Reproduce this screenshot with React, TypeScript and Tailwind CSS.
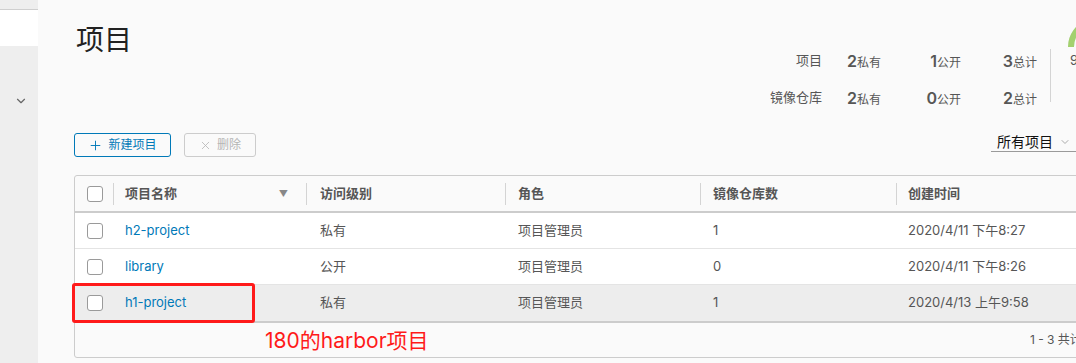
import React from 'react';
import { ChevronDown, Plus, X } from 'lucide-react';

const font = { fontFamily: 'Inter, "Noto Sans CJK SC", sans-serif' };

const rows = [
  { name: 'h2-project', access: '私有', role: '项目管理员', count: '1', time: '2020/4/11 下午8:27', active: false },
  { name: 'library', access: '公开', role: '项目管理员', count: '0', time: '2020/4/11 下午8:26', active: false },
  { name: 'h1-project', access: '私有', role: '项目管理员', count: '1', time: '2020/4/13 上午9:58', active: true },
];

const stats = [
  { label: '项目', priv: '2', pub: '1', total: '3' },
  { label: '镜像仓库', priv: '2', pub: '0', total: '2' },
];

const cols = 'grid grid-cols-[38px_193px_199px_195px_196px_268px]';

const Checkbox = () => (
  <div className="ml-[12px] h-[16px] w-[16px] rounded-[3px] border border-[#9a9a9a] bg-white" />
);

const Stat = ({ n, t }: { n: string; t: string }) => (
  <div className="flex items-baseline justify-end text-[#565656]">
    <span className="text-[16px] font-semibold">{n}</span>
    <span className="text-[12px]">{t}</span>
  </div>
);

export default function App() {
  return (
    <div className="flex h-[363px] w-[1076px] overflow-hidden bg-[#fafafa]" style={font}>
      {/* sidebar */}
      <div className="flex w-[38px] shrink-0 flex-col bg-[#eeeeee]">
        <div className="h-[10px] border-b border-[#cfcfcf]" />
        <div className="h-[36px] bg-white" />
        <div className="mt-[48px] flex justify-center pl-[3px]">
          <ChevronDown className="h-[14px] w-[14px] text-[#666]" strokeWidth={2} />
        </div>
      </div>

      {/* main */}
      <div className="flex flex-col pl-[36px] pt-[18px]">
        <div className="flex h-[115px]">
          <h1 className="mt-[4px] w-[686px] shrink-0 pl-[2px] text-[28px] leading-[36px] text-[#222]">项目</h1>
          <div className="mt-[24px] grid h-fit grid-cols-[62px_59px_80px_76px]">
            {stats.map((s) => (
              <React.Fragment key={s.label}>
                <div className="flex h-[37px] items-center justify-end text-[13px] text-[#565656]">{s.label}</div>
                <div className="flex h-[37px] items-center justify-end"><Stat n={s.priv} t="私有" /></div>
                <div className="flex h-[37px] items-center justify-end"><Stat n={s.pub} t="公开" /></div>
                <div className="flex h-[37px] items-center justify-end"><Stat n={s.total} t="总计" /></div>
              </React.Fragment>
            ))}
          </div>
          <div className="ml-[13px] mt-[31px] h-[53px] w-px bg-[#d4d4d4]" />
          <div className="ml-[14px] flex flex-col">
            <svg width="64" height="30" viewBox="0 0 64 30" className="block">
              <path d="M6 29 A26 26 0 0 1 58 29" fill="none" stroke="#e4e4e4" strokeWidth="6" />
              <path d="M6 29 A26 26 0 0 1 24 4.2" fill="none" stroke="#a3d16e" strokeWidth="6" />
            </svg>
            <span className="mt-[4px] pl-[5px] text-[13px] leading-[16px] text-[#565656]">9.9 MB</span>
          </div>
        </div>

        {/* toolbar */}
        <div className="flex w-[1005px] items-start">
          <button className="flex h-[24px] w-[97px] items-center justify-center gap-[5px] rounded-[3px] border border-[#0079b8] text-[12px] text-[#0079b8]">
            <Plus className="h-[15px] w-[15px]" strokeWidth={1.5} />
            新建项目
          </button>
          <button className="ml-[13px] flex h-[24px] w-[72px] items-center justify-center gap-[5px] rounded-[3px] border border-[#cccccc] text-[12px] text-[#b5b5b5]">
            <X className="h-[13px] w-[13px]" strokeWidth={1.5} />
            删除
          </button>
          <div className="ml-auto flex w-[88px] items-center border-b border-[#9a9a9a] pb-[1px] pl-[6px]">
            <span className="text-[14px] leading-[17px] text-[#111]">所有项目</span>
            <ChevronDown className="ml-[6px] h-[12px] w-[12px] text-[#aaa]" />
          </div>
        </div>

        {/* table */}
        <div className="relative mt-[18px] w-[1092px] rounded-[3px] border border-[#cccccc]">
          <div className={`${cols} h-[35px] items-center text-[13px] font-semibold text-[#565656]`}>
            <div className="flex h-full items-center"><Checkbox /></div>
            <div className="flex h-[22px] items-center justify-between border-l border-[#d4d4d4] pl-[11px] pr-[18px]">
              项目名称
              <span className="text-[9px] text-[#888]">▼</span>
            </div>
            <div className="flex h-[22px] items-center border-l border-[#d4d4d4] pl-[13px]">访问级别</div>
            <div className="flex h-[22px] items-center border-l border-[#d4d4d4] pl-[12px]">角色</div>
            <div className="flex h-[22px] items-center border-l border-[#d4d4d4] pl-[12px]">镜像仓库数</div>
            <div className="flex h-[22px] items-center border-l border-[#d4d4d4] pl-[11px]">创建时间</div>
          </div>
          <div className="border-t-2 border-[#cccccc]">
            {rows.map((r, i) => (
              <div
                key={r.name}
                className={`${cols} h-[36px] items-center text-[13px] text-[#565656] ${i < rows.length - 1 ? 'border-b border-[#e4e4e4]' : ''} ${r.active ? 'bg-[#ededed]' : 'bg-white'}`}
              >
                <div><Checkbox /></div>
                <div className="pl-[12px] text-[#0079b8]">{r.name}</div>
                <div className="pl-[14px]">{r.access}</div>
                <div className="pl-[13px]">{r.role}</div>
                <div className="pl-[13px]">{r.count}</div>
                <div className="pl-[12px]">{r.time}</div>
              </div>
            ))}
          </div>
          <div className="flex h-[36px] items-center justify-end border-t-2 border-[#cccccc] pr-[33px] text-[12px] text-[#565656]">
            1 - 3 共计 3 条记录
          </div>

          {/* annotation */}
          <div className="absolute left-[-3px] top-[107px] h-[40px] w-[183px] rounded-[3px] border-[3px] border-[#ff1a1a]" />
          <div className="absolute left-[190px] top-[153px] text-[21px] leading-[24px] text-[#ff1a1a]">180的harbor项目</div>
        </div>
      </div>
    </div>
  );
}
